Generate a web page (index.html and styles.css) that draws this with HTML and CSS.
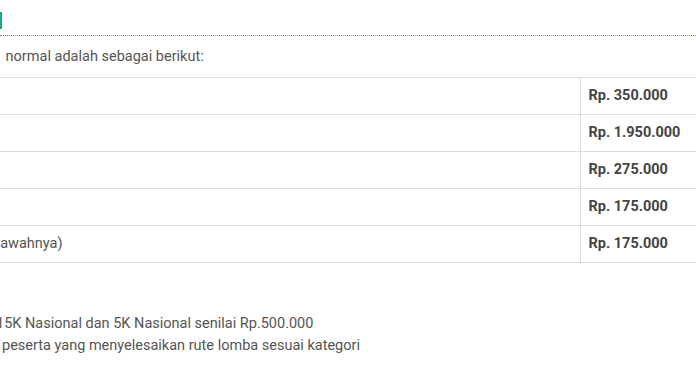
FILE: index.html
```html
<!DOCTYPE html>
<html lang="id">
<head>
<meta charset="utf-8">
<link rel="stylesheet" href="styles.css">
</head>
<body>
<div class="page">
  <div class="heading"><span class="bar"></span></div>
  <p class="intro">&nbsp;normal adalah sebagai berikut:</p>
  <table class="prices">
    <tr><td class="name"></td><td class="price">Rp. 350.000</td></tr>
    <tr><td class="name"></td><td class="price">Rp. 1.950.000</td></tr>
    <tr><td class="name"></td><td class="price">Rp. 275.000</td></tr>
    <tr><td class="name"></td><td class="price">Rp. 175.000</td></tr>
    <tr><td class="name"><span class="cut-b">bawahnya)</span></td><td class="price">Rp. 175.000</td></tr>
  </table>
  <ul class="notes">
    <li><span class="cut-1">15K Nasional dan 5K Nasional senilai Rp.500.000</span></li>
    <li class="second">peserta yang menyelesaikan rute lomba sesuai kategori</li>
  </ul>
</div>
</body>
</html>
```

FILE: styles.css
```css
html, body {
  margin: 0;
  padding: 0;
  background: #ffffff;
}

body {
  font-family: Roboto, "Noto Sans", Arial, sans-serif;
  font-size: 14.5px;
  color: #555555;
}

.page {
  width: 696px;
  height: 385px;
  overflow: hidden;
}

.heading {
  height: 35px;
  border-bottom: 1px dotted #3aa356;
  display: flex;
  align-items: flex-start;
}

.bar {
  display: block;
  width: 2px;
  height: 17px;
  margin-top: 12px;
  background: #19a88c;
}

.intro {
  margin: 11px 0 0 0;
  line-height: 20px;
  height: 20px;
  padding-left: 2px;
}

.prices {
  margin-top: 10px;
  border-collapse: collapse;
  width: 800px;
}

.prices td {
  border-top: 1px solid #dddddd;
  border-bottom: 1px solid #dddddd;
  height: 37px;
  padding: 0;
  line-height: 20px;
  box-sizing: border-box;
}

.prices .name {
  width: 580px;
  border-right: 1px solid #dddddd;
  overflow: hidden;
  white-space: nowrap;
}

.prices .price {
  padding-left: 8px;
  font-weight: 700;
  color: #444444;
}

.cut-b {
  display: inline-block;
  margin-left: -8px;
}

.notes {
  list-style: none;
  margin: 50px 0 0 0;
  padding: 0;
  line-height: 22px;
  white-space: nowrap;
}

.cut-1 {
  display: inline-block;
  margin-left: -4px;
}

.notes .second {
  padding-left: 2px;
}
```
